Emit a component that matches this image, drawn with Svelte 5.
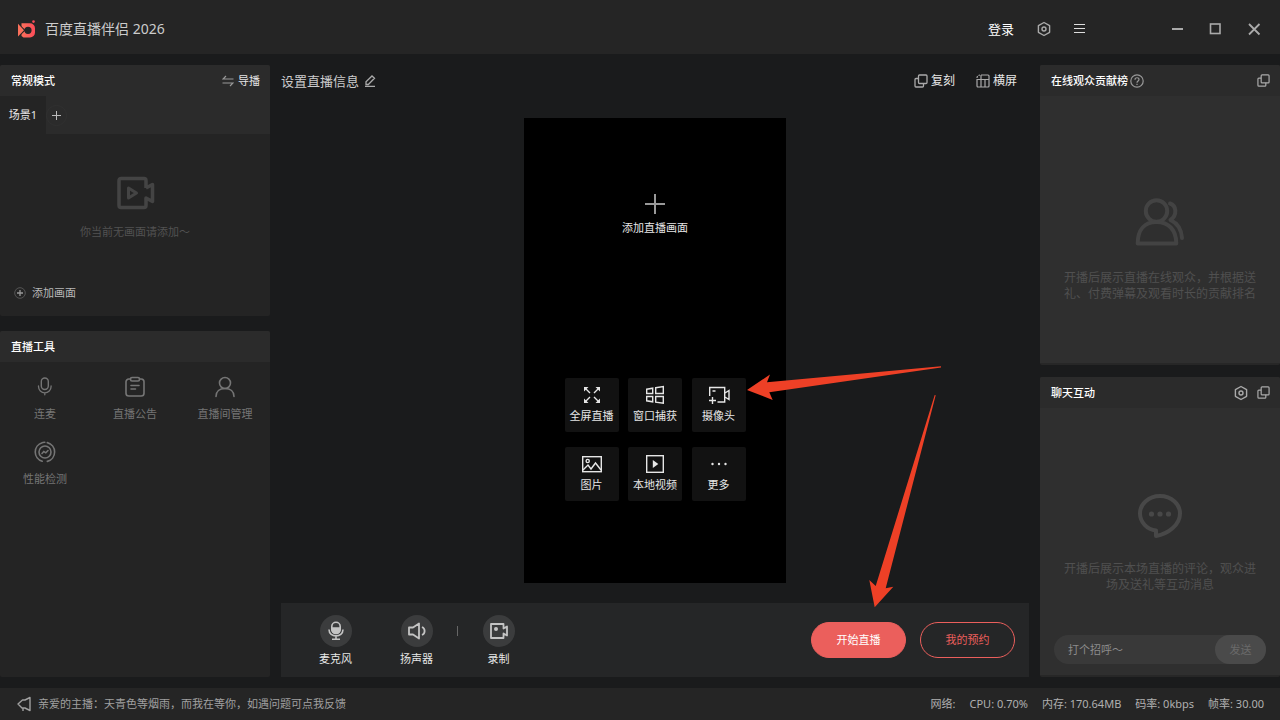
<script>
  const tools = [
    { name: '连麦', icon: 'mic' },
    { name: '直播公告', icon: 'notice' },
    { name: '直播间管理', icon: 'user' },
    { name: '性能检测', icon: 'perf' },
  ];

  const sources = [
    { name: '全屏直播', icon: 'fullscreen' },
    { name: '窗口捕获', icon: 'window' },
    { name: '摄像头', icon: 'camera' },
    { name: '图片', icon: 'image' },
    { name: '本地视频', icon: 'video' },
    { name: '更多', icon: 'more' },
  ];

  const stats = [
    ['网络:', ''],
    ['CPU:', '0.70%'],
    ['内存:', '170.64MB'],
    ['码率:', '0kbps'],
    ['帧率:', '30.00'],
  ];

  let message = '';
</script>

{#snippet gear()}
  <svg width="16" height="16" viewBox="0 0 16 16" fill="none" stroke="currentColor" stroke-width="1.4" stroke-linejoin="round">
    <path d="M8 1.5l5.600 3.200v6.600L8 14.500l-5.600-3.200V4.700z" />
    <circle cx="8" cy="8" r="2" />
  </svg>
{/snippet}

{#snippet copy(size)}
  <svg width={size} height={size} viewBox="0 0 14 14" fill="none" stroke="currentColor" stroke-width="1.3" stroke-linejoin="round">
    <rect x="4.5" y="1" width="8.5" height="8.5" rx="1" />
    <path d="M4.5 4.5H2a1 1 0 0 0-1 1V12a1 1 0 0 0 1 1h6.5a1 1 0 0 0 1-1V9.5" />
  </svg>
{/snippet}

{#snippet toolIcon(icon)}
  <svg width="22" height="22" viewBox="0 0 22 22" fill="none" stroke="currentColor" stroke-width="1.6" stroke-linecap="round">
    {#if icon === 'mic'}
      <rect x="7.3" y="2" width="7" height="11.5" rx="3.5" stroke-width="1.4" />
      <path d="M4.5 10v.5a6.3 6.3 0 0 0 12.600 0V10M10.800 16.800v2" stroke-width="1.3" />
    {:else if icon === 'notice'}
      <path d="M6.5 3H4.800A2.800 2.800 0 0 0 2 5.800v11.400A2.800 2.800 0 0 0 4.800 20h12.400a2.800 2.800 0 0 0 2.800-2.800V5.800A2.800 2.800 0 0 0 17.200 3h-1.700" />
      <rect x="6.5" y="1.5" width="9" height="3.5" rx="1.5" />
      <path d="M7 9.500h8M7 13h4.500" />
    {:else if icon === 'user'}
      <circle cx="11" cy="7" r="5.500" />
      <path d="M2 20.500c0-5 3.600-8 9-8s9 3 9 8" />
    {:else}
      <path d="M13.300 1.600a9.700 9.700 0 0 1 0 18.800M8.200 20.300a9.700 9.700 0 0 1 0-18.600M8.800 1.500a9.700 9.700 0 0 1 2-.2" />
      <circle cx="11" cy="11" r="6" />
      <path d="M8 12.500L9.800 10.500l2 1.300L14 9.500" />
    {/if}
  </svg>
{/snippet}

{#snippet sourceIcon(icon)}
  <svg width="22" height="20" viewBox="0 0 22 20" fill="none" stroke="currentColor" stroke-width="1.4">
    {#if icon === 'fullscreen'}
      <path d="M9 8L4 3M13 8l5-5M9 12l-5 5M13 12l5 5" />
      <path d="M3 6.500V2h4.500zM19 6.500V2h-4.500zM3 13.500V18h4.500zM19 13.500V18h-4.500z" fill="currentColor" stroke="none" />
    {:else if icon === 'window'}
      <path d="M2.700 4.200l6-1v5.300h-6zM11.700 2.700l7.600-1.200v7h-7.600zM2.700 11.500h6v5.300l-6-1zM11.700 11.500h7.600v6.800l-7.600-1.200z" />
    {:else if icon === 'camera'}
      <path d="M1.700 11V2.500h15V17H9.500M4.500 6h3M4.500 12v7M1 15.500h7M17 8l4-2.500v9L17 12" />
    {:else if icon === 'image'}
      <rect x="1.700" y="2.700" width="18.600" height="15" />
      <circle cx="6.700" cy="7" r="1.600" />
      <path d="M2 16l5-5 3 4 4.500-6L20 16" />
    {:else if icon === 'video'}
      <rect x="2.700" y="1.700" width="16.600" height="16.600" />
      <path d="M8.800 6v8l5.500-4z" fill="currentColor" stroke="none" />
    {:else}
      <g fill="currentColor" stroke="none">
        <circle cx="4.500" cy="10" r="1.200" /><circle cx="11" cy="10" r="1.200" /><circle cx="17.500" cy="10" r="1.200" />
      </g>
    {/if}
  </svg>
{/snippet}

<div class="app">
  <header class="titlebar">
    <svg width="20" height="20" viewBox="0 0 20 20">
      <defs>
        <linearGradient id="brand" x1="0" x2="1">
          <stop offset="0" stop-color="#fa6f5b" />
          <stop offset="1" stop-color="#fc4b58" />
        </linearGradient>
      </defs>
      <path d="M4.500 4.300H13a5 5 0 0 1 5 5v4.200a5 5 0 0 1-5 5H6.500l-2-1.500zM11 7.700a3.600 3.600 0 1 0 0 7.200 3.600 3.600 0 0 0 0-7.200z" fill="url(#brand)" fill-rule="evenodd" />
      <path d="M0 3l8.700 8.300L0 19.500z" fill="#252525" />
      <path d="M1 4.800l6 6.500-6 6.200z" fill="#fb705b" />
      <circle cx="16.500" cy="2.600" r="1.300" fill="#fc4b58" />
    </svg>
    <h1>百度直播伴侣 2026</h1>
    <button class="login">登录</button>
    <button class="icon-btn settings" aria-label="设置">{@render gear()}</button>
    <button class="icon-btn menu" aria-label="菜单">
      <svg width="16" height="16" viewBox="0 0 16 16" stroke="currentColor"><path d="M3 3.500h11M3 7.500h11M3 11.500h11" /></svg>
    </button>
    <div class="window-controls">
      <button class="icon-btn" aria-label="最小化">
        <svg width="16" height="16" viewBox="0 0 16 16" stroke="currentColor" stroke-width="2"><path d="M2 8h11" /></svg>
      </button>
      <button class="icon-btn" aria-label="最大化">
        <svg width="16" height="16" viewBox="0 0 16 16" fill="none" stroke="currentColor" stroke-width="1.600"><rect x="2.500" y="3" width="9.500" height="9.500" /></svg>
      </button>
      <button class="icon-btn" aria-label="关闭">
        <svg width="16" height="16" viewBox="0 0 16 16" stroke="currentColor" stroke-width="1.800"><path d="M3 3l10.500 10.500M13.500 3L3 13.500" /></svg>
      </button>
    </div>
  </header>

  <main>
    <aside class="left">
      <section class="panel">
        <div class="panel-head">
          <h2>常规模式</h2>
          <button class="switch">
            <svg width="12" height="12" viewBox="0 0 12 12" fill="none" stroke="#999" stroke-width="1.200"><path d="M4 1L1 4h10.500M8 11l3-3H.5" /></svg>
            导播
          </button>
        </div>
        <div class="tabs">
          <button class="tab">场景1</button>
          <button class="tab-add" aria-label="添加场景">
            <svg width="9" height="9" viewBox="0 0 9 9" stroke="currentColor"><path d="M4.500 0v9M0 4.500h9" /></svg>
          </button>
        </div>
        <div class="scene">
          <svg width="40" height="36" viewBox="-1 0 40 36" fill="none" stroke="#444" stroke-width="3.500" stroke-linejoin="round">
            <path d="M30 13V5.500a2 2 0 0 0-2-2H5a2 2 0 0 0-2 2v25a2 2 0 0 0 2 2h23a2 2 0 0 0 2-2V23l6.500 3.500v-17L30 13" />
            <path d="M12.500 13v10l8-5z" stroke-width="3" />
          </svg>
          <p>你当前无画面请添加～</p>
          <button class="add-source">
            <svg width="12" height="12" viewBox="0 0 12 12" fill="none" stroke="#999"><circle cx="6" cy="6" r="5.300" stroke="#555" /><path d="M6 3v6M3 6h6" stroke-width="1.300" /></svg>
            添加画面
          </button>
        </div>
      </section>

      <section class="panel grow">
        <div class="panel-head"><h2>直播工具</h2></div>
        <div class="tools">
          {#each tools as tool}
            <button class="tool">
              {@render toolIcon(tool.icon)}
              <span>{tool.name}</span>
            </button>
          {/each}
        </div>
      </section>
    </aside>

    <section class="center">
      <div class="info">
        <button class="info-title">
          设置直播信息
          <svg width="12" height="12" viewBox="0 0 12 12" fill="none" stroke="#aaa" stroke-width="1.300"><path d="M2 9.500V6.800L8 1l2.500 2.300-6.200 6.200zM1 11.500h10" /></svg>
        </button>
        <button class="info-btn">{@render copy(14)}<span>复刻</span></button>
        <button class="info-btn">
          <svg width="14" height="14" viewBox="0 0 14 14" fill="none" stroke="currentColor" stroke-width="1.200"><path d="M5 1h7a1 1 0 0 1 1 1v10a1 1 0 0 1-1 1H2a1 1 0 0 1-1-1V5.500h12M5 1v12M9 5.500V13" /><path d="M1 4a3 3 0 0 1 3-3" stroke-dasharray="2 1" /></svg>
          <span>横屏</span>
        </button>
      </div>

      <div class="stage">
        <button class="stage-add">
          <svg width="20" height="20" viewBox="0 0 20 20" stroke="#999" stroke-width="2"><path d="M10 0v20M0 10h20" /></svg>
          添加直播画面
        </button>
        <div class="sources">
          {#each sources as source}
            <button class="source">
              {@render sourceIcon(source.icon)}
              <span>{source.name}</span>
            </button>
          {/each}
        </div>
      </div>

      <div class="controls">
        <button class="control">
          <span class="round">
            <svg width="20" height="20" viewBox="0 0 20 20" fill="none" stroke="currentColor" stroke-width="1.600">
              <rect x="5.800" y="1.300" width="8.400" height="11" rx="4.200" />
              <path d="M6 7h8v1.500a4 4 0 0 1-8 0z" fill="currentColor" />
              <path d="M3 8.500c0 8.500 14 8.500 14 0M10 15v3M6 18.200h8" />
            </svg>
          </span>
          麦克风
        </button>
        <button class="control">
          <span class="round">
            <svg width="20" height="20" viewBox="0 0 20 20" fill="none" stroke="currentColor" stroke-width="1.800" stroke-linejoin="round">
              <path d="M2 6.500h4L12 2.500v15l-6-4H2zM15 6c3.500 1.500 3.500 6.500 0 8" />
            </svg>
          </span>
          扬声器
        </button>
        <i class="divider"></i>
        <button class="control">
          <span class="round">
            <svg width="20" height="20" viewBox="0 0 20 20" fill="none" stroke="currentColor" stroke-width="1.800" stroke-linejoin="round">
              <path d="M14.500 7.500V3H2v14h12.500v-4.500l3.500 2v-9z" />
              <circle cx="7" cy="8" r="2" fill="currentColor" stroke="none" />
            </svg>
          </span>
          录制
        </button>
        <div class="actions">
          <button class="pill start">开始直播</button>
          <button class="pill">我的预约</button>
        </div>
      </div>

      <svg class="arrows" viewBox="0 0 748 612" fill="#ee4026" aria-hidden="true">
        <path d="M466 325l23-15.500-3 7.800 174-16v1.200L488.300 327.300l3.400 7.700z" />
        <path d="M593.700 542.300L588.300 515l6.400 6L653.700 330l1 .3L604.700 523.300l7.600-1.600z" />
      </svg>
    </section>

    <aside class="right">
      <section class="panel light">
        <div class="panel-head">
          <h2>在线观众贡献榜</h2>
          <svg class="help" width="14" height="14" viewBox="0 0 14 14" fill="none" stroke="#999" stroke-width="1.200"><circle cx="7" cy="7" r="6.200" /><path d="M5 5.700c0-2.700 4-2.500 4-.2C9 7 7 7 7 8.700M7 9.700V11" /></svg>
          <button class="icon-btn last" aria-label="弹出">{@render copy(13)}</button>
        </div>
        <div class="empty audience">
          <svg width="50" height="50" viewBox="0 0 50 50" fill="none" stroke="#434343" stroke-width="4" stroke-linejoin="round" stroke-linecap="round">
            <circle cx="21.500" cy="14" r="10.700" />
            <path d="M2.700 46.500c0-14 7-21.500 18.800-21.500s19.800 7.500 19.800 21.500z" />
            <path d="M35 6.500c6.500 2 7.500 11.500.5 16.500 6.500 3 11 9.500 11.500 18" />
          </svg>
          <p>开播后展示直播在线观众，并根据送礼、付费弹幕及观看时长的贡献排名</p>
        </div>
      </section>

      <section class="panel light">
        <div class="panel-head">
          <h2>聊天互动</h2>
          <button class="icon-btn last" aria-label="聊天设置">{@render gear()}</button>
          <button class="icon-btn" aria-label="弹出聊天">{@render copy(13)}</button>
        </div>
        <div class="empty chat">
          <svg width="44" height="44" viewBox="0 0 44 44" fill="none" stroke="#484848" stroke-width="4" stroke-linejoin="round">
            <path d="M22 2C10.500 2 2 10 2 19.500 2 28 9 35.500 18 36.500V42C30 40 42 31 42 19.500 42 10 33.500 2 22 2z" />
            <g fill="#484848" stroke="none"><circle cx="13.500" cy="20" r="2.600" /><circle cx="22" cy="20" r="2.600" /><circle cx="30.500" cy="20" r="2.600" /></g>
          </svg>
          <p>开播后展示本场直播的评论，观众进场及送礼等互动消息</p>
        </div>
        <form class="say">
          <input type="text" placeholder="打个招呼～" aria-label="聊天内容" bind:value={message} />
          <button type="button" class="send">发送</button>
        </form>
      </section>
    </aside>
  </main>

  <footer>
    <a class="feedback" href="#feedback">
      <svg width="16" height="16" viewBox="0 0 16 16" fill="none" stroke="currentColor" stroke-width="1.400" stroke-linejoin="round"><path d="M14 1.500v13L9 12H6L2 8l4.500-4H9zM7 12v3" /></svg>
      亲爱的主播：天青色等烟雨，而我在等你，如遇问题可点我反馈
    </a>
    {#each stats as [label, value]}
      <span class="stat">{label} {value}</span>
    {/each}
  </footer>
</div>

<style>
  :global(body) {
    background: #1a1b1c;
  }

  .app {
    display: flex;
    flex-direction: column;
    min-height: 100vh;
    background: #1a1b1c;
    color: #e6e6e6;
    font: 11px/16px "Noto Sans", "Noto Sans CJK SC", sans-serif;
  }

  button {
    padding: 0;
    border: 0;
    background: none;
    color: inherit;
    font: inherit;
    cursor: pointer;
  }

  h1, h2, p {
    margin: 0;
  }

  svg {
    display: block;
    flex: none;
  }

  .titlebar {
    display: flex;
    align-items: center;
    height: 54px;
    padding: 4px 18px 0 17px;
    box-sizing: border-box;
    background: #252525;
  }

  h1 {
    margin-left: 8px;
    font-size: 14px;
    font-weight: 400;
    color: #ccc;
  }

  .login {
    margin-left: auto;
    font-size: 13px;
    color: #fff;
  }

  .icon-btn {
    color: #aaa;
  }

  .settings {
    margin-left: 22px;
  }

  .menu {
    margin-left: 19px;
    color: #ddd;
  }

  .window-controls {
    display: flex;
    gap: 22px;
    margin-left: 83px;
  }

  main {
    display: grid;
    grid-template-columns: 270px 1fr 240px;
    gap: 11px;
    flex: 1;
    padding: 11px 0;
  }

  .left, .right {
    display: flex;
    flex-direction: column;
  }

  .left {
    gap: 15px;
  }

  .right {
    gap: 12px;
  }

  .panel {
    display: flex;
    flex-direction: column;
    border-radius: 2px;
    background: #242424;
  }

  .grow {
    flex: 1;
  }

  .light {
    flex: 1;
    box-sizing: border-box;
    border-bottom: 2px solid #272727;
    background: #2f2f2f;
  }

  .panel-head {
    display: flex;
    align-items: center;
    height: 31px;
    padding: 0 10px 0 11px;
    border-radius: 2px 2px 0 0;
    background: #2b2b2b;
  }

  h2 {
    font-size: 11px;
    font-weight: 500;
    color: #fff;
  }

  .switch {
    display: flex;
    align-items: center;
    gap: 4px;
    margin-left: auto;
  }

  .help {
    margin-left: 2px;
  }

  .last {
    margin-left: auto;
  }

  .last + .icon-btn {
    margin-left: 8px;
  }

  .tabs {
    display: flex;
    height: 38px;
    background: #2b2b2b;
  }

  .tab {
    width: 46px;
    background: #242424;
  }

  .tab-add {
    display: grid;
    place-items: center;
    align-self: center;
    width: 21px;
    height: 21px;
    border: 1px solid #303030;
    border-radius: 50%;
    box-sizing: border-box;
    color: #bbb;
  }

  .scene {
    display: flex;
    flex-direction: column;
    align-items: center;
    padding: 41px 14px 15px;
  }

  .scene p {
    margin: 13px 0 45px;
    color: #525252;
  }

  .add-source {
    display: flex;
    align-items: center;
    align-self: flex-start;
    gap: 6px;
    color: #b8b8b8;
  }

  .tools {
    display: grid;
    grid-template-columns: repeat(3, 1fr);
    row-gap: 19px;
    padding-top: 14px;
  }

  .tool {
    display: flex;
    flex-direction: column;
    align-items: center;
    gap: 8px;
    color: #757575;
  }

  .center {
    position: relative;
    display: flex;
    flex-direction: column;
  }

  .info {
    display: flex;
    align-items: center;
    gap: 21px;
    height: 31px;
    padding-right: 12px;
  }

  .info-title {
    display: flex;
    align-items: center;
    gap: 5px;
    margin-right: auto;
    font-size: 13px;
    color: #ccc;
  }

  .info-btn {
    display: flex;
    align-items: center;
    gap: 3px;
    font-size: 12px;
    color: #aaa;
  }

  .info-btn span {
    color: #e6e6e6;
  }

  .stage {
    display: flex;
    flex-direction: column;
    align-items: center;
    align-self: center;
    width: 262px;
    aspect-ratio: 262 / 465;
    box-sizing: border-box;
    margin: 22px 0 auto;
    padding-top: 76px;
    background: #000;
  }

  .stage-add {
    display: flex;
    flex-direction: column;
    align-items: center;
    gap: 6px;
  }

  .sources {
    display: grid;
    grid-template-columns: repeat(3, 54px);
    justify-content: space-between;
    row-gap: 15px;
    width: 181px;
    margin-top: 142px;
  }

  .source {
    display: flex;
    flex-direction: column;
    align-items: center;
    gap: 3px;
    height: 54px;
    padding-top: 7px;
    border-radius: 2px;
    background: #121212;
    white-space: nowrap;
  }

  .controls {
    display: flex;
    align-items: center;
    height: 74px;
    padding: 0 14px;
    background: #252627;
  }

  .control {
    display: flex;
    flex-direction: column;
    align-items: center;
    gap: 4px;
    width: 81px;
    padding-top: 2px;
  }

  .round {
    display: grid;
    place-items: center;
    width: 32px;
    height: 32px;
    border-radius: 50%;
    background: #3b3c3d;
    color: #c4c4c4;
  }

  .divider {
    width: 1px;
    height: 10px;
    margin-bottom: 18px;
    background: #666;
  }

  .actions {
    display: flex;
    gap: 14px;
    margin-left: auto;
  }

  .pill {
    width: 95px;
    height: 36px;
    border: 1px solid #eb5f5c;
    border-radius: 18px;
    color: #eb5f5c;
  }

  .start {
    background: #eb5f5c;
    color: #fff;
  }

  .arrows {
    position: absolute;
    inset: 0;
    width: 100%;
    height: 100%;
    pointer-events: none;
  }

  .empty {
    display: flex;
    flex-direction: column;
    align-items: center;
    flex: 1;
    gap: 23px;
    padding: 0 24px;
    font-size: 12px;
    text-align: center;
    color: #505050;
  }

  .audience {
    padding-top: 101px;
  }

  .chat {
    padding-top: 86px;
  }

  .say {
    display: flex;
    height: 29px;
    margin: 0 14px 11px;
    border-radius: 15px;
    background: #393939;
  }

  .say input {
    flex: 1;
    min-width: 0;
    padding: 0 14px;
    border: 0;
    outline: 0;
    background: none;
    color: #ccc;
    font: inherit;
  }

  .say input::placeholder {
    color: #8c8c8c;
  }

  .send {
    width: 51px;
    border-radius: 15px;
    background: #4a4a4a;
    color: #6a6a6a;
  }

  footer {
    display: flex;
    align-items: center;
    gap: 14px;
    height: 32px;
    padding: 0 16px;
    background: #252525;
    color: #b0b0b0;
  }

  .feedback {
    display: flex;
    align-items: center;
    gap: 6px;
    margin-right: auto;
    color: #a0a0a0;
    text-decoration: none;
  }
</style>
